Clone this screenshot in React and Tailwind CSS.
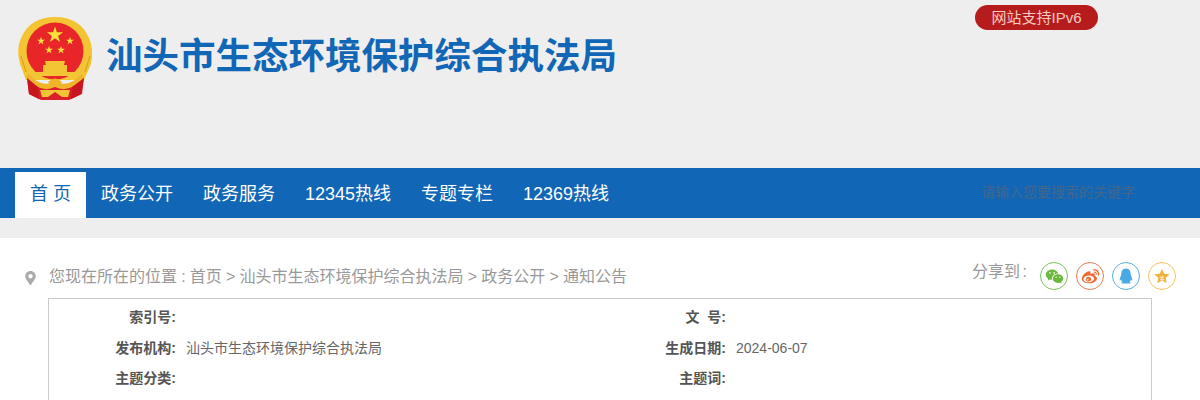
import React from "react";
import { RiWechatFill, RiWeiboFill, RiQqFill } from "react-icons/ri";
import { FaMapMarkerAlt } from "react-icons/fa";

const cjk = "font-['Liberation_Sans','Noto_Sans_CJK_SC',sans-serif]";

function Star({ cx, cy, r, rot = 0 }) {
  const pts = [];
  for (let i = 0; i < 10; i++) {
    const rad = i % 2 ? r * 0.382 : r;
    const a = ((-90 + rot + i * 36) * Math.PI) / 180;
    pts.push(`${cx + rad * Math.cos(a)},${cy + rad * Math.sin(a)}`);
  }
  return <polygon points={pts.join(" ")} fill="#fbe13a" />;
}

function Emblem() {
  return (
    <svg width="80" height="86" viewBox="0 0 80 86" className="shrink-0">
      <path d="M11 64 L5 48 Q1 33 6 22 Q15 1 40 1 Q65 1 74 22 Q79 33 76 48 L69 64 Z" fill="#f3c433" />
      <path d="M6 40 L11 56 M75 40 L70 56" stroke="#d99a1c" strokeWidth="1" />
      <circle cx="40" cy="35" r="28.5" fill="#e8262a" />
      <Star cx={40} cy={19} r={8.5} />
      <Star cx={26} cy={25} r={4.2} />
      <Star cx={55} cy={25} r={4.2} />
      <Star cx={34} cy={34} r={4.2} />
      <Star cx={46} cy={34} r={4.2} />
      <path d="M30 45 H50 L49 49 H52 V56 H28 V49 H31 Z" fill="#f3c433" />
      <path d="M13 56 H67 L64 60 H16 Z" fill="#f3c433" />
      <path d="M12 62 L14 78 L26 84 H54 L67 78 L69 62 L60 70 H20 Z" fill="#d9202a" />
      <path d="M13 58 Q26 72 40 66 Q54 72 67 58 L69 62 Q54 78 40 71 Q26 78 11 62 Z" fill="#f0b428" />
      <path d="M33 66 Q40 59 47 66 L44 70 H36 Z" fill="#f0b428" />
      <path d="M25 74 H55 L53 81 H47 L40 76 L33 81 H27 Z" fill="#f3c433" />
      <path d="M12 62 L14 78 L24 83 L23 71 Z M69 62 L66 78 L56 83 L57 71 Z" fill="#c9151f" />
    </svg>
  );
}

function ShareIcon({ border, color, children }) {
  return (
    <span className={`flex h-7 w-7 items-center justify-center rounded-full border ${border} ${color}`}>
      {children}
    </span>
  );
}

function InfoCell({ label, value }) {
  return (
    <div className="flex h-[30.5px] items-center">
      <span className="w-[127px] shrink-0 text-right text-sm font-bold whitespace-pre text-[#555]">{label}</span>
      <span className="ml-[10px] text-sm text-[#666]">{value}</span>
    </div>
  );
}

export default function App() {
  const nav = ["政务公开", "政务服务", "12345热线", "专题专栏", "12369热线"];
  return (
    <div className={`h-[400px] w-[1200px] overflow-hidden bg-white ${cjk}`}>
      <header className="flex h-[168px] justify-between bg-[#eeeeee] pr-[102px]">
        <div className="flex items-start pl-[15px] pt-[16px]">
          <Emblem />
          <h1 className="ml-[11px] mt-[19px] text-[36.5px] leading-[44px] font-bold whitespace-nowrap text-[#1166b6]">
            汕头市生态环境保护综合执法局
          </h1>
        </div>
        <div className="mt-[5px] flex h-[25px] w-[123px] items-center justify-center rounded-full bg-[#b71c1c] pt-[1px] text-[15px] text-[#f8c9c4]">
          网站支持IPv6
        </div>
      </header>

      <nav className="flex h-[50px] items-end justify-between bg-[#1166b6] pl-[15px] pr-[65px]">
        <ul className="flex h-[46px] items-center text-lg text-white">
          <li className="flex h-full w-[71px] items-center justify-center bg-white pb-[3px] text-[#1166b6]">首 页</li>
          {nav.map((n) => (
            <li key={n} className="mx-[15px] flex h-full items-center pb-[3px] whitespace-nowrap">{n}</li>
          ))}
        </ul>
        <span className="mb-[19px] text-sm leading-[14px] text-[#44668a]">请输入您要搜索的关键字</span>
      </nav>

      <div className="h-[20px] bg-[#eeeeee]" />

      <div className="flex justify-between pl-[25px] pr-[24px]">
        <div className="mt-[25px] flex items-center text-base text-[#999]">
          <FaMapMarkerAlt className="mt-[3px] h-[14px] w-[11px] text-[#aaa]" />
          <span className="ml-[13px] whitespace-nowrap leading-[22px] [word-spacing:-0.25px]">
            您现在所在的位置 : 首页 &gt; 汕头市生态环境保护综合执法局 &gt; 政务公开 &gt; 通知公告
          </span>
        </div>
        <div className="mt-[23px] flex items-start">
          <span className="text-base leading-[22px] whitespace-nowrap text-[#999] [word-spacing:-2px]">分享到 :</span>
          <div className="mt-[1px] ml-[13px] flex gap-[8px]">
            <ShareIcon border="border-[#7cc35c]" color="text-[#6cb83f]"><RiWechatFill size={19} /></ShareIcon>
            <ShareIcon border="border-[#ee7b4f]" color="text-[#ee6a33]"><RiWeiboFill size={19} /></ShareIcon>
            <ShareIcon border="border-[#5aaee0]" color="text-[#4aa8e4]"><RiQqFill size={18} /></ShareIcon>
            <ShareIcon border="border-[#f3c25e]" color="text-[#f2b33d]">
              <svg width="18" height="18" viewBox="0 0 24 24">
                <path fill="currentColor" d="M12 2.5l3 6.4 7 .9-5.1 4.8 1.3 6.9-6.2-3.4-6.2 3.4 1.3-6.9L2 9.8l7-.9z" />
                <path d="M9 13.5h5l-4 3.5h5" fill="none" stroke="#fff" strokeWidth="1.2" />
              </svg>
            </ShareIcon>
          </div>
        </div>
      </div>

      <div className="mx-[48px] mt-[8px] grid h-[200px] grid-cols-[550px_1fr] content-start border border-[#cccccc] pt-[3px]">
        <InfoCell label="索引号:" value="" />
        <InfoCell label="文  号:" value="" />
        <InfoCell label="发布机构:" value="汕头市生态环境保护综合执法局" />
        <InfoCell label="生成日期:" value="2024-06-07" />
        <InfoCell label="主题分类:" value="" />
        <InfoCell label="主题词:" value="" />
      </div>
    </div>
  );
}
